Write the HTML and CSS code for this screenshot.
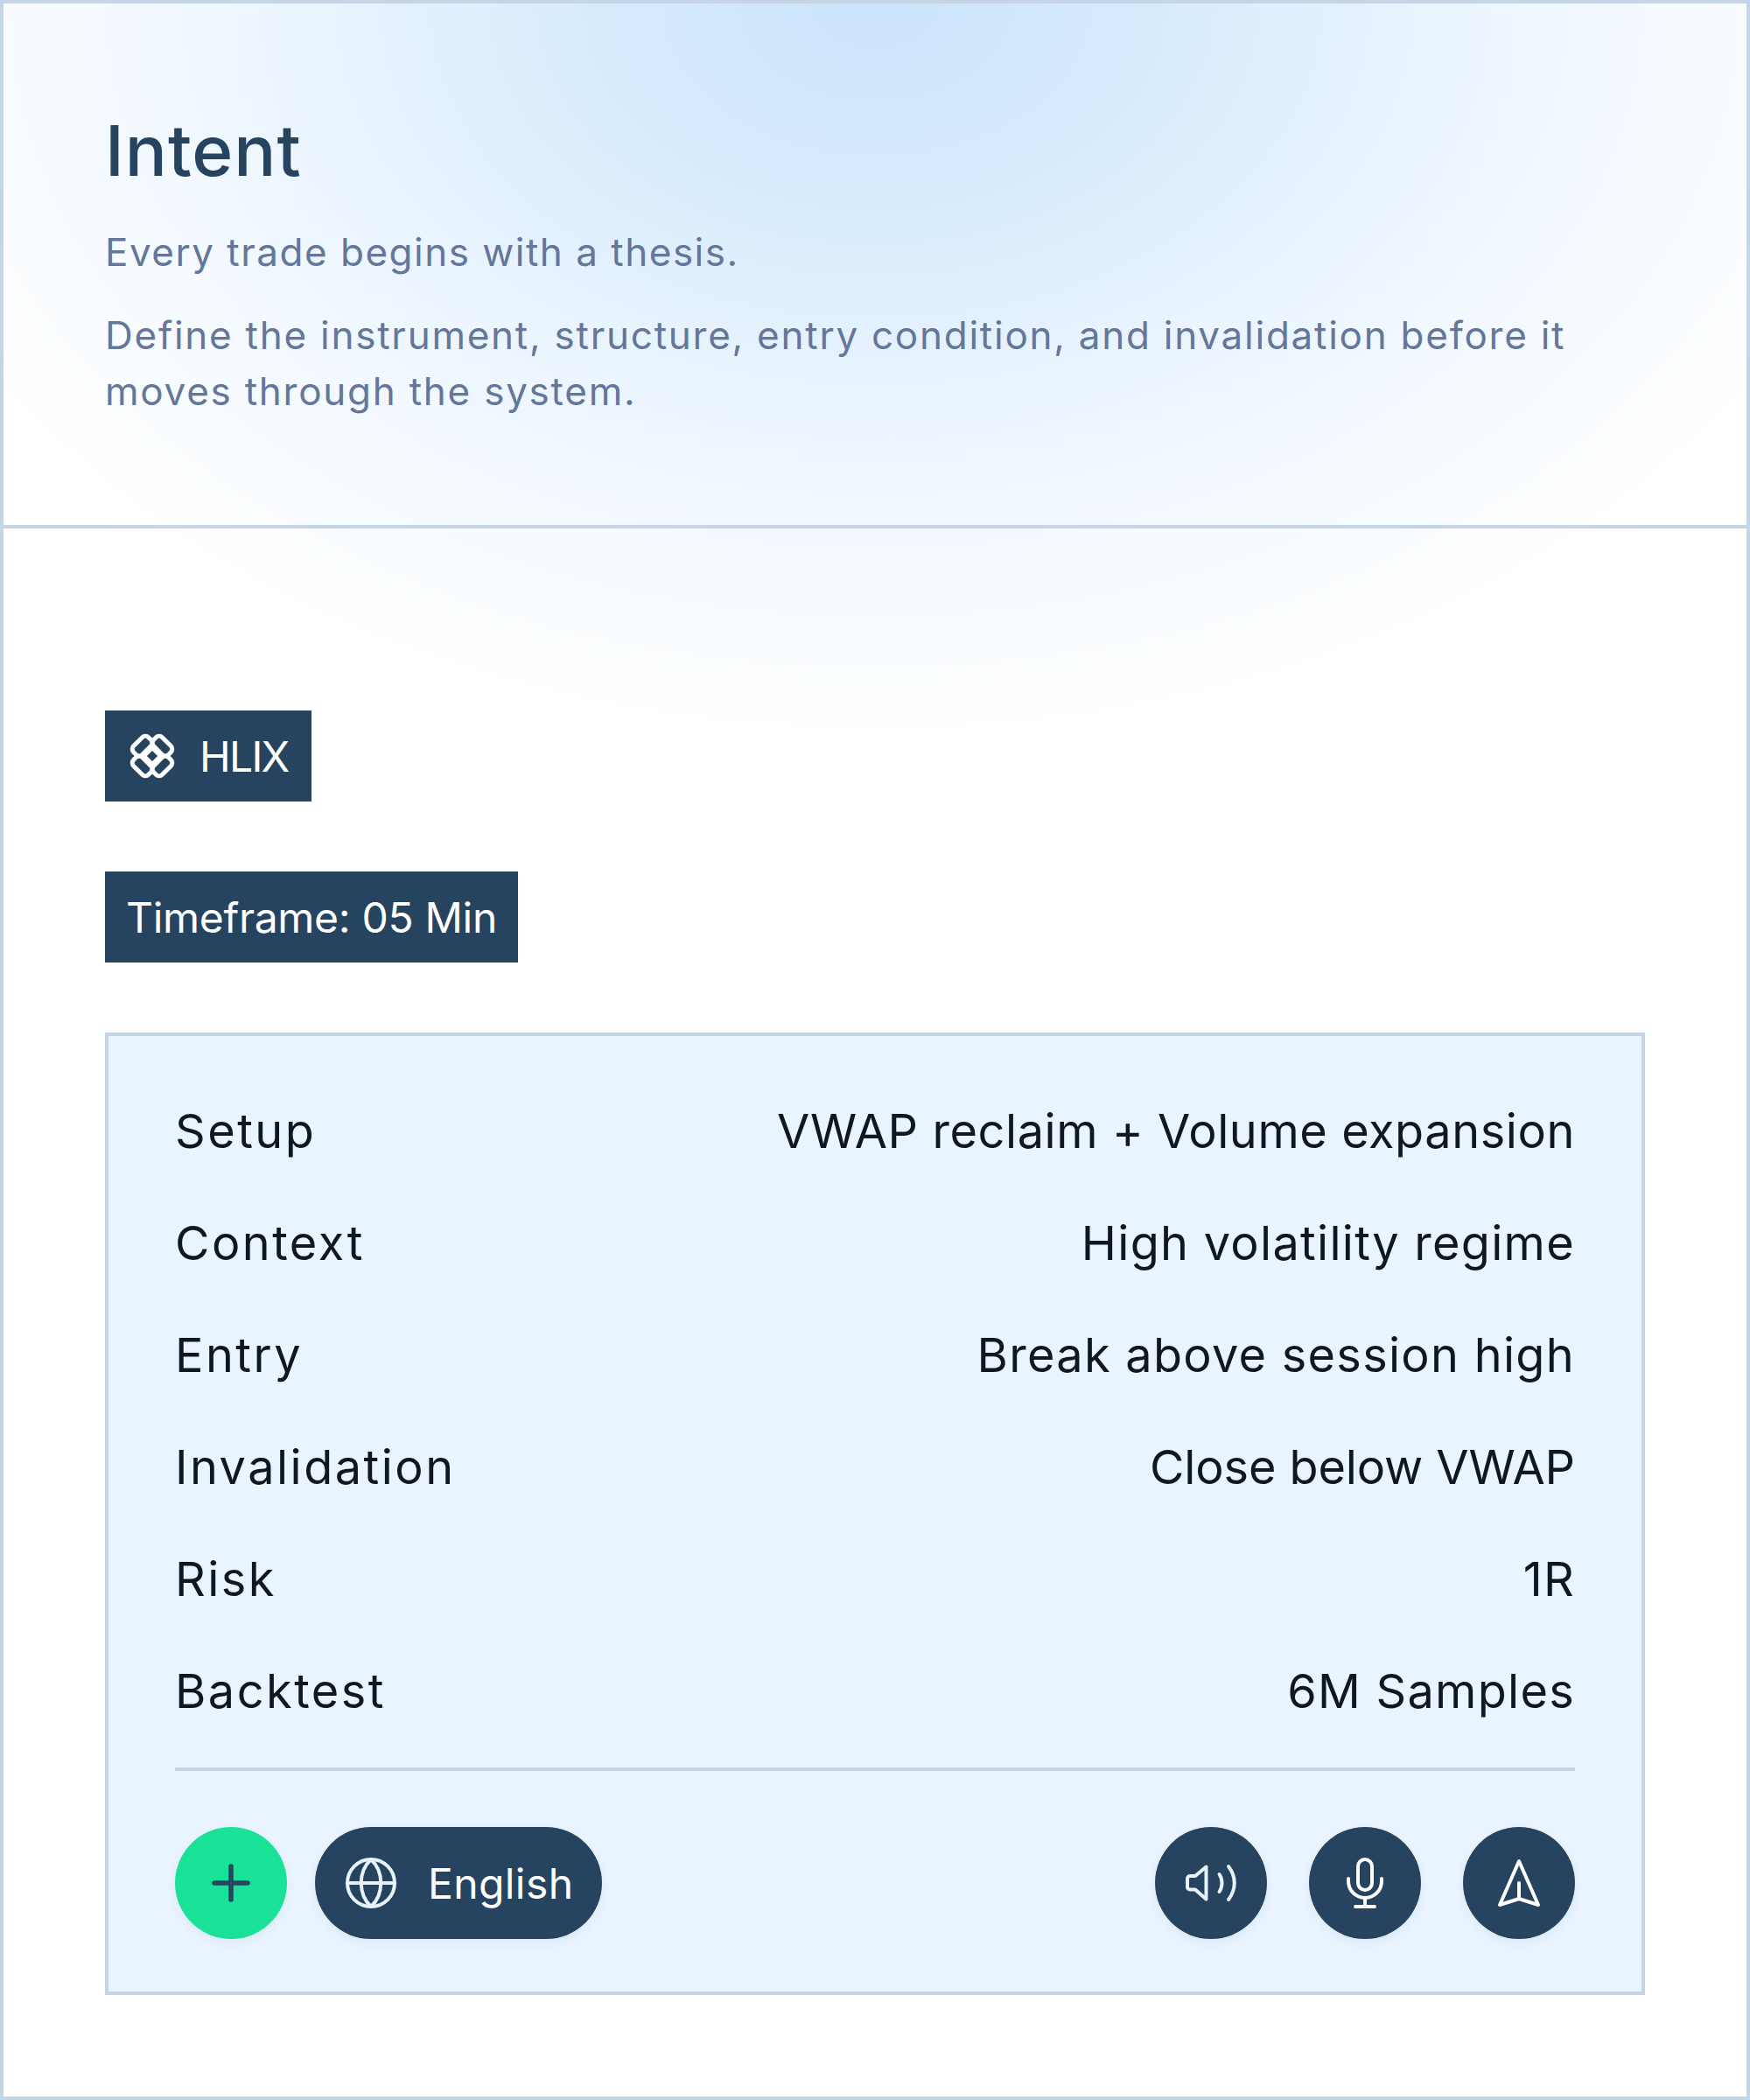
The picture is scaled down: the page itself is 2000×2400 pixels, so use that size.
FILE: index.html
```html
<!DOCTYPE html>
<html lang="en">
<head>
    <meta charset="UTF-8">
    <title>Intent</title>
    <link rel="stylesheet" href="styles.css">
</head>
<body>
    <div class="panel">
        <div class="head">
            <h1>Intent</h1>
            <p class="lead">Every trade begins with a thesis.</p>
            <p class="desc">Define the instrument, structure, entry condition, and invalidation before it moves through the system.</p>
        </div>
        <div class="main">
            <div class="tag tag-logo">
                <svg class="logo" viewBox="0 0 52 52" fill="none" stroke="#fff" stroke-width="5">
                    <rect x="2.600" y="7.600" width="24" height="14" rx="5" transform="rotate(-45 14.600 14.600)"/>
                    <rect x="25.400" y="7.600" width="24" height="14" rx="5" transform="rotate(45 37.400 14.600)"/>
                    <rect x="2.600" y="30.400" width="24" height="14" rx="5" transform="rotate(45 14.600 37.400)"/>
                    <rect x="25.400" y="30.400" width="24" height="14" rx="5" transform="rotate(-45 37.400 37.400)"/>
                    <rect x="19.200" y="19.200" width="13.600" height="13.600" transform="rotate(45 26 26)"/>
                </svg>
                <span>HLIX</span>
            </div>
            <div class="tag tag-time">Timeframe: 05 Min</div>

            <div class="card">
                <div class="rows">
                    <div class="row"><span>Setup</span><span class="caps">VWAP reclaim + Volume expansion</span></div>
                    <div class="row"><span>Context</span><span class="value">High volatility regime</span></div>
                    <div class="row"><span>Entry</span><span class="value">Break above session high</span></div>
                    <div class="row"><span>Invalidation</span><span class="tight">Close below VWAP</span></div>
                    <div class="row"><span>Risk</span><span class="value">1R</span></div>
                    <div class="row"><span>Backtest</span><span class="value">6M Samples</span></div>
                </div>
                <div class="toolbar">
                    <div class="tools">
                        <button class="round green">
                            <svg viewBox="0 0 44 44" width="44" height="44" fill="none" stroke="#26445f" stroke-width="5.500" stroke-linecap="round"><path d="M22 3v38M3 22h38"/></svg>
                        </button>
                        <button class="pill">
                            <svg viewBox="0 0 58 58" width="58" height="58" fill="none" stroke="#e8f2fb" stroke-width="4"><circle cx="29" cy="29" r="27"/><path d="M29 2C14 16 14 42 29 56C44 42 44 16 29 2z"/><path d="M2 29h54"/></svg>
                            <span>English</span>
                        </button>
                    </div>
                    <div class="tools tools-right">
                        <button class="round">
                            <svg viewBox="0 0 58 44" width="58" height="44" fill="none" stroke="#e8f2fb" stroke-width="4" stroke-linecap="round" stroke-linejoin="round"><path d="M23.500 3.500V40.500L11 29.500H5a3 3 0 0 1-3-3V17a3 3 0 0 1 3-3h6z"/><path d="M38.500 12c4 6 4 14 0 20"/><path d="M49 3c9 12 9 26 0 38"/></svg>
                        </button>
                        <button class="round">
                            <svg viewBox="0 0 44 58" width="44" height="58" fill="none" stroke="#fff" stroke-width="4" stroke-linecap="round" stroke-linejoin="round"><rect x="14" y="2" width="16" height="35" rx="8"/><path d="M3 24v3a19 19 0 0 0 38 0v-3"/><path d="M22 46v10M11 56h22"/></svg>
                        </button>
                        <button class="round">
                            <svg viewBox="0 0 52 58" width="52" height="58" fill="none" stroke="#fff" stroke-width="4" stroke-linecap="round" stroke-linejoin="round"><path d="M26 4L4 54l22-7 22 7z"/><path d="M26 29v18"/></svg>
                        </button>
                    </div>
                </div>
            </div>
        </div>
    </div>
</body>
</html>
```

FILE: styles.css
```css
* {
    box-sizing: border-box;
}
body {
    margin: 0;
    font-family: Inter, "Liberation Sans", sans-serif;
    background: #fff;
}
.panel {
    width: 2000px;
    height: 2400px;
    border: 4px solid #c5d5e5;
    background: radial-gradient(ellipse 1200px 850px at 996px 0, #cbe4fb 0%, #d6eafc 25%, #ebf5fe 55%, #ffffff 100%), #fff;
    background-repeat: no-repeat;
}
.head {
    height: 600px;
    padding: 112px 116px 0;
    border-bottom: 4px solid #c5d5e5;
}
h1 {
    margin: 0 0 28px;
    font-size: 80px;
    line-height: 112px;
    font-weight: 500;
    letter-spacing: 1px;
    color: #26445f;
}
.lead, .desc {
    margin: 0;
    font-size: 44px;
    line-height: 64px;
    color: #64779a;
    letter-spacing: 1.500px;
}
.lead {
    margin-bottom: 31px;
}
.desc {
    letter-spacing: 1.750px;
}
.main {
    padding: 208px 76px 0 116px;
}
.tag {
    display: flex;
    align-items: center;
    width: fit-content;
    height: 104px;
    margin-bottom: 80px;
    background: #26445f;
    color: #fff;
    font-size: 48px;
}
.tag-logo {
    gap: 28px;
    padding: 0 26px 0 28px;
    letter-spacing: -1.700px;
}
.tag-time {
    padding: 0 24px;
    letter-spacing: -0.300px;
}
.logo {
    width: 52px;
    height: 52px;
}
.card {
    width: 1760px;
    height: 1100px;
    padding: 44px 76px 0;
    border: 4px solid #c5d5e5;
    background: #e9f4fe;
    color: #0f1720;
}
.rows {
    padding-bottom: 24px;
    border-bottom: 4px solid #c5d5e5;
}
.row {
    display: flex;
    justify-content: space-between;
    align-items: center;
    height: 128px;
    font-size: 54px;
    letter-spacing: 2.500px;
}
.value {
    letter-spacing: 1.300px;
}
.caps {
    letter-spacing: 0.600px;
}
.tight {
    letter-spacing: -0.100px;
}
.toolbar {
    display: flex;
    justify-content: space-between;
    margin-top: 64px;
}
.tools {
    display: flex;
    gap: 32px;
}
.tools-right {
    gap: 48px;
}
.round, .pill {
    display: flex;
    align-items: center;
    justify-content: center;
    height: 128px;
    border: none;
    padding: 0;
    background: #26445f;
    box-shadow: 0 4px 12px rgba(38, 68, 95, 0.06);
    font-family: inherit;
}
.round {
    width: 128px;
    border-radius: 50%;
}
.green {
    background: #19e298;
}
.pill {
    justify-content: flex-start;
    gap: 36px;
    width: 328px;
    padding-left: 35px;
    border-radius: 64px;
    color: #fff;
    font-size: 48px;
    letter-spacing: 0.400px;
}
```
